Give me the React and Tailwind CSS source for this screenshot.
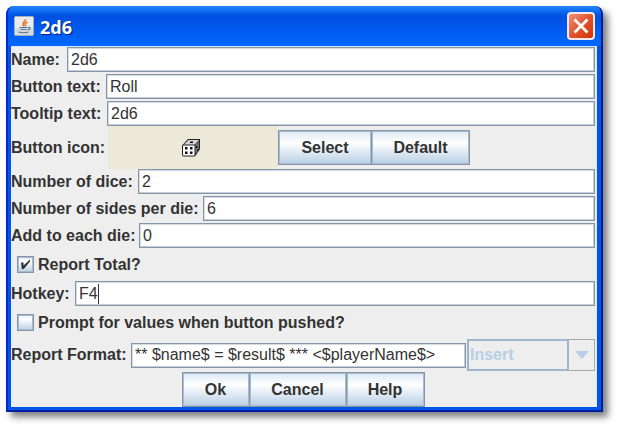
import React from "react";

const fieldBox =
  "h-[25px] min-w-0 flex-1 rounded-none border border-[#8496a8] bg-white px-[3px] font-['Liberation_Sans',Arial,sans-serif] text-base leading-5 font-normal text-[#333] shadow-[inset_-1px_-1px_0_#c3ced8,inset_1px_1px_0_#d3dbe3] outline-none";

const buttonBox =
  "h-[35px] border border-[#8496a8] bg-linear-to-b from-[#dce8f3] via-white via-35% to-[#b8cfe5] text-center text-base leading-5 font-bold text-[#333] shadow-[inset_0_0_0_1px_#a9bccd]";

function Field({ id, label, labelWidth, value }) {
  return (
    <div className="flex items-center">
      <label htmlFor={id} className={`${labelWidth} shrink-0 whitespace-nowrap`}>
        {label}
      </label>
      <input id={id} type="text" defaultValue={value} className={fieldBox} />
    </div>
  );
}

function Tick({ id, label, checked }) {
  return (
    <div className="flex h-[17px] items-center gap-1 pl-1.5">
      <span className="relative flex h-[17px] w-[17px]">
        <input
          id={id}
          type="checkbox"
          defaultChecked={checked}
          className="peer h-[17px] w-[17px] appearance-none border border-[#8496a8] bg-linear-to-b from-[#e4edf5] via-white via-30% to-[#b8cfe5] shadow-[inset_0_0_0_1px_#a9bccd]"
        />
        <svg
          viewBox="0 0 17 17"
          className="pointer-events-none absolute inset-0 hidden h-[17px] w-[17px] peer-checked:block"
          aria-hidden="true"
        >
          <path d="M4 6.5h2.5v3L13 3.5v2L6.8 13H4.8Z" fill="#333" />
        </svg>
      </span>
      <label htmlFor={id} className="whitespace-nowrap">
        {label}
      </label>
    </div>
  );
}

function JavaIcon() {
  return (
    <svg viewBox="0 0 20 20" className="h-5 w-5" aria-hidden="true">
      <rect x="0.5" y="0.5" width="19" height="19" rx="1" fill="#e9edf0" stroke="#a4afba" />
      <path d="M1 12h18v7H1Z" fill="#d3d9df" />
      <path d="M11.5 3c.8 2.6-5 3.5-1.5 7.500M13.500 6c-3 1.200-2.800 2-1.500 4.500" fill="none" stroke="#e8782a" strokeWidth="1.600" />
      <path d="M5.500 11.500h8M6.500 13.500h6M4.500 16c3 1 8 1 10 0M14 11.500c3-.8 3 2-.5 2.500" fill="none" stroke="#557791" strokeWidth="1.200" />
    </svg>
  );
}

function DieIcon() {
  return (
    <svg viewBox="0 0 20 20" className="h-5 w-5" aria-hidden="true">
      <path d="M1 7.500 7 1h12v10l-5 7.500H2L1 17Z" fill="#222" />
      <path d="M3 6.500 7.500 2H18l-4 4.500Z" fill="#d5d5d5" />
      <path d="M2 7.500h11.500v10H2Z" fill="#fff" />
      <path d="M14.500 7 18 3v8l-3.500 5Z" fill="#777" />
      <path d="M4 9h2.500v2.500H4ZM9 9h2.500v2.500H9ZM4 13.500h2.500V16H4ZM9 13.500h2.500V16H9ZM9 3.500h3V5H9ZM15 8h1.500v2H15ZM16.500 11H18v2h-1.500Z" fill="#111" />
    </svg>
  );
}

export default function App() {
  return (
    <main className="min-h-screen bg-white py-1.5 pr-[17px] pl-1.5 font-['Liberation_Sans',Arial,sans-serif] text-base leading-5 font-bold text-[#333]">
      <section className="overflow-hidden rounded-t-lg border-r-2 border-b-2 border-l-2 border-r-[#001ca0] border-b-[#001ca0] border-l-[#0028d7] bg-[#0054e8] shadow-[5px_5px_7px_0_rgba(0,0,0,0.5)]">
        <header className="flex h-10 items-center bg-linear-to-b from-[#2585fb] from-0% via-[#0050e0] via-25% to-[#0268ff] px-1.5">
          <JavaIcon />
          <h1 className="ml-1.5 flex-1 pt-0.5 font-['Noto_Sans','Open_Sans',sans-serif] text-lg leading-6 font-bold text-white [text-shadow:1px_1px_1px_#002080]">
            2d6
          </h1>
          <button
            type="button"
            aria-label="Close"
            className="flex h-7 w-7 items-center justify-center rounded border-2 border-[#f4e9ea] bg-linear-to-br from-[#ee9376] via-[#e2512c] to-[#cf3500]"
          >
            <svg viewBox="0 0 16 16" className="h-4 w-4" aria-hidden="true">
              <path d="m1.500 1.500 13 13M14.500 1.500l-13 13" stroke="#fff" strokeWidth="2.800" />
            </svg>
          </button>
        </header>

        <form className="mr-1 mb-[3px] ml-[3px] border-t border-r border-[#dce6f5] bg-[#eee] pr-px" onSubmit={(e) => e.preventDefault()}>
          <div className="flex flex-col gap-0.5">
            <Field id="name" label="Name:" labelWidth="w-14" value="2d6" />
            <Field id="text" label="Button text:" labelWidth="w-[95px]" value="Roll" />
            <Field id="tip" label="Tooltip text:" labelWidth="w-24" value="2d6" />
          </div>
          <div className="flex h-[43px] items-center">
            <span className="w-[97px] shrink-0 whitespace-nowrap">Button icon:</span>
            <span className="flex h-full w-[170px] items-center justify-center bg-[#ece9d8] pr-1">
              <DieIcon />
            </span>
            <button type="button" className={`${buttonBox} w-[94px]`}>Select</button>
            <button type="button" className={`${buttonBox} -ml-px w-[99px]`}>Default</button>
          </div>
          <div className="flex flex-col gap-0.5">
            <Field id="dice" label="Number of dice:" labelWidth="w-[127px]" value="2" />
            <Field id="sides" label="Number of sides per die:" labelWidth="w-48" value="6" />
            <Field id="add" label="Add to each die:" labelWidth="w-32" value="0" />
          </div>
          <div className="my-2">
            <Tick id="total" label="Report Total?" checked />
          </div>
          <div className="relative">
            <Field id="hotkey" label="Hotkey:" labelWidth="w-16" value="F4" />
            <span className="absolute top-[3px] left-[87px] h-5 w-px bg-[#333]" />
          </div>
          <div className="my-2">
            <Tick id="prompt" label="Prompt for values when button pushed?" checked={false} />
          </div>
          <div className="flex items-center">
            <label htmlFor="format" className="w-[120px] shrink-0 whitespace-nowrap">Report Format:</label>
            <input id="format" type="text" defaultValue="** $name$ = $result$ *** <$playerName$>" className={fieldBox} />
            <div className="relative ml-px h-8 w-32">
              <select
                disabled
                aria-label="Insert"
                className="h-8 w-full appearance-none rounded-none border border-[#aaa] bg-[#eee] px-0.5 font-bold text-[#b8cfe5] opacity-100"
              >
                <option>Insert</option>
              </select>
              <span className="pointer-events-none absolute inset-y-0 left-0 w-[102px] border-2 border-[#9fb5ca]" />
              <svg viewBox="0 0 14 8" className="pointer-events-none absolute top-3 right-1.5 h-2 w-3.5" aria-hidden="true">
                <path d="M0 0h14L7 8Z" fill="#b8cfe5" />
              </svg>
            </div>
          </div>
          <div className="flex justify-center pt-px">
            <button type="submit" className={`${buttonBox} w-[68px]`}>Ok</button>
            <button type="button" className={`${buttonBox} -ml-px w-[98px]`}>Cancel</button>
            <button type="button" className={`${buttonBox} -ml-px w-[79px]`}>Help</button>
          </div>
        </form>
      </section>
    </main>
  );
}
